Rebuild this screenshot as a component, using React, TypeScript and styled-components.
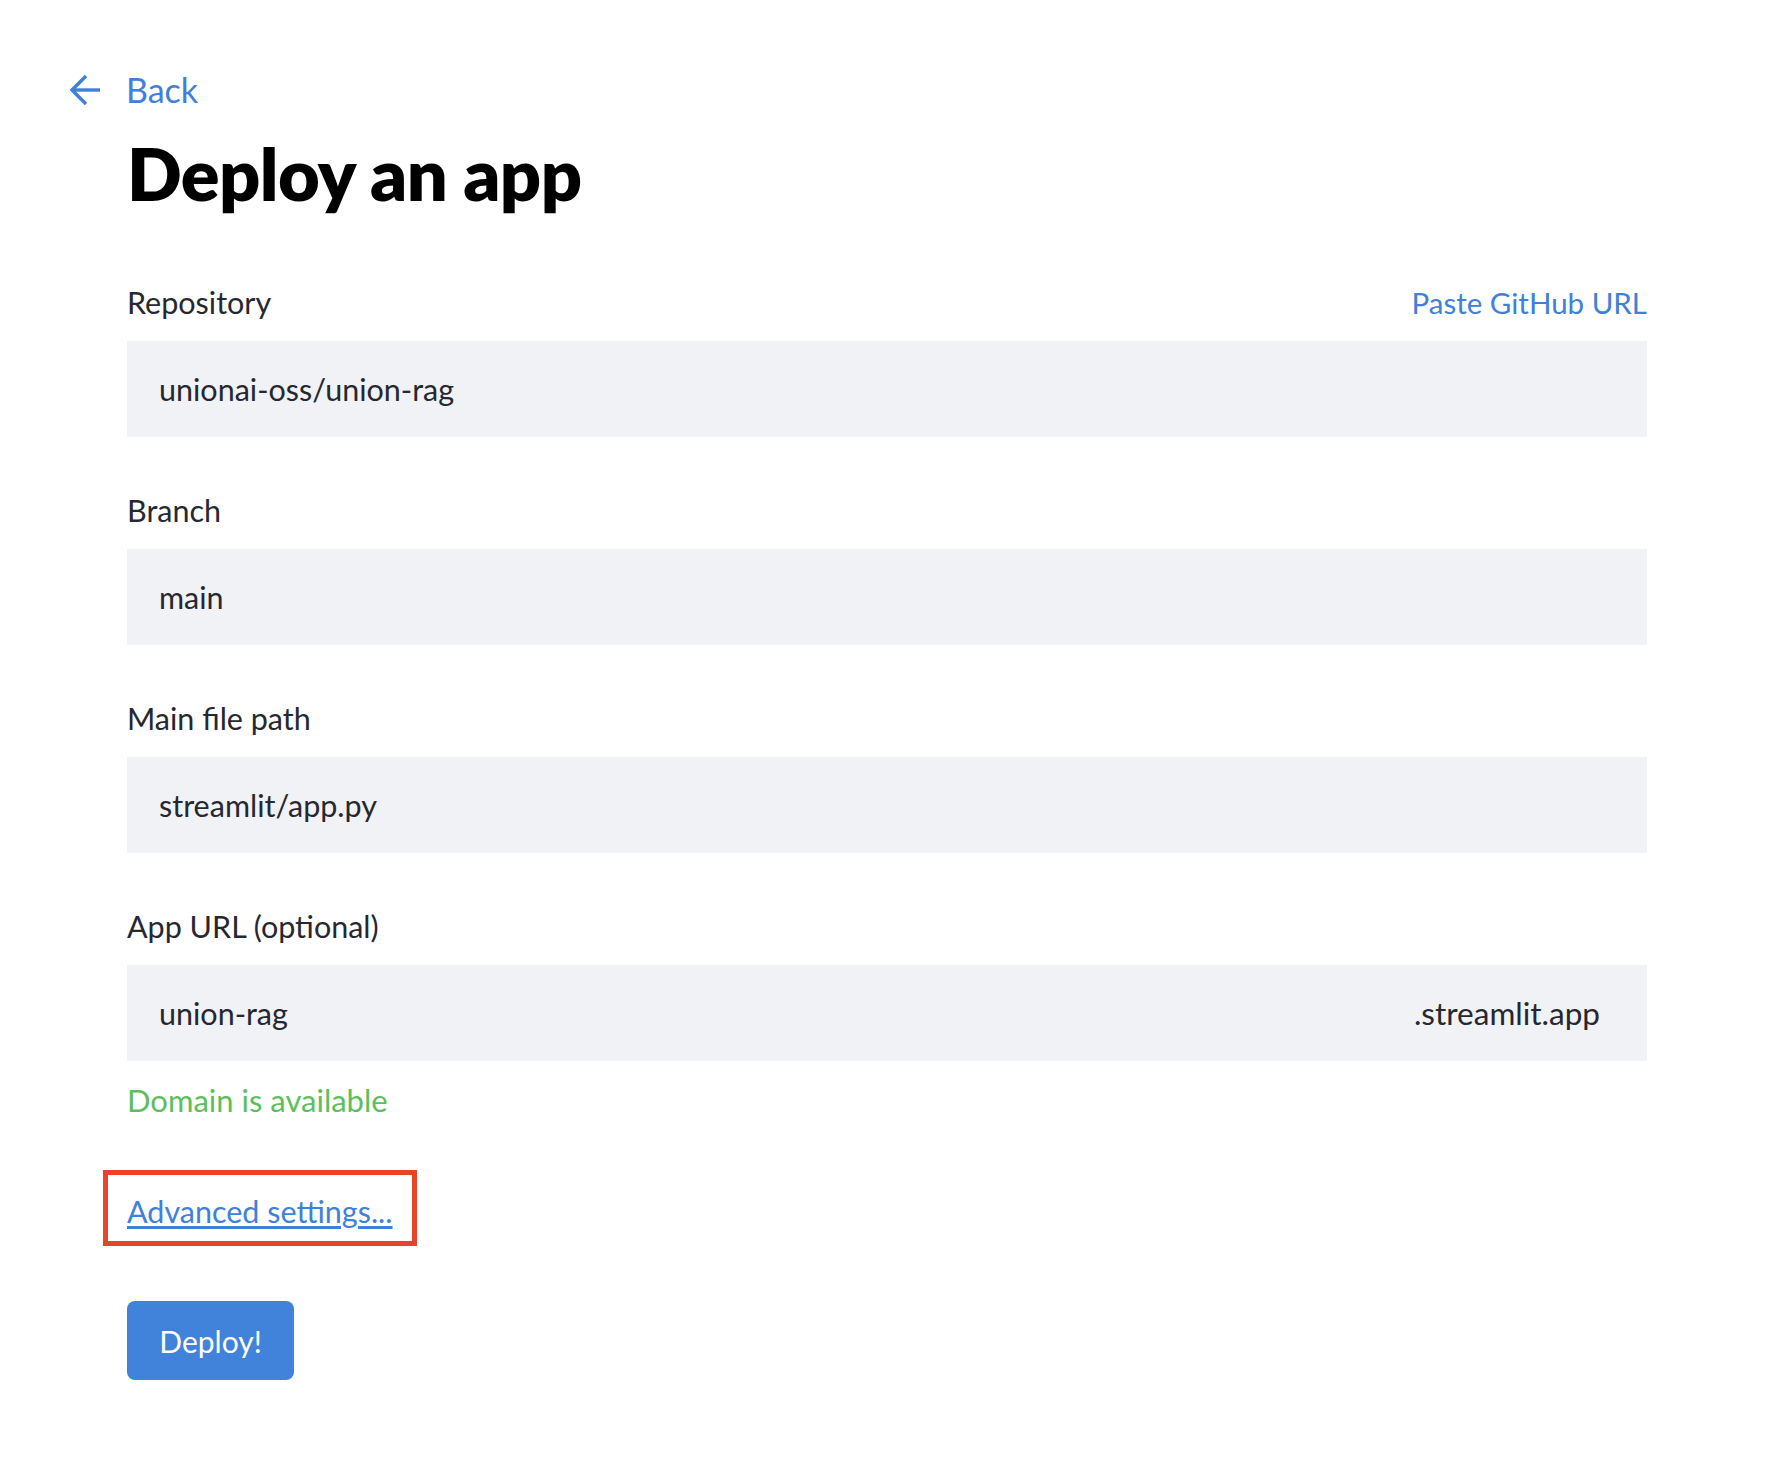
import React from "react";
import styled, { createGlobalStyle } from "styled-components";

const Global = createGlobalStyle`
  html, body { margin: 0; padding: 0; background: #ffffff; }
  body { font-family: Lato, "Noto Sans", sans-serif; color: #262730; }
  * { box-sizing: border-box; }
`;

const Page = styled.main`
  width: 1768px;
  padding: 72px 121px 80px 127px;
  display: flex;
  flex-direction: column;
`;

const BackLink = styled.a`
  display: flex;
  align-items: center;
  gap: 24px;
  margin-left: -57px;
  height: 36px;
  color: #3f80da;
  font-size: 34px;
  line-height: 36px;
  text-decoration: none;
  cursor: pointer;
`;

const Title = styled.h1`
  margin: 22px 0 0 0;
  font-size: 72px;
  line-height: 1.2;
  font-weight: 800;
  color: #000;
  letter-spacing: -0.6px;
`;

const Form = styled.form`
  display: flex;
  flex-direction: column;
  margin-top: 64px;
`;

const Field = styled.div<{ $last?: boolean }>`
  display: flex;
  flex-direction: column;
  margin-bottom: ${(p) => (p.$last ? "0" : "51px")};
`;

const LabelRow = styled.div`
  display: flex;
  justify-content: space-between;
  align-items: baseline;
  height: 44px;
  margin-bottom: 17px;
`;

const Label = styled.label`
  font-size: 30.5px;
  line-height: 44px;
  color: #262730;
`;

const TextLink = styled.a`
  font-size: 29.5px;
  line-height: 44px;
  color: #3f80da;
  cursor: pointer;
`;

const InputBox = styled.div`
  height: 96px;
  background: #f0f2f6;
  display: flex;
  align-items: center;
  justify-content: space-between;
  padding: 0 47px 0 32px;
  font-size: 30.5px;
  color: #262730;
`;

const Suffix = styled.span`
  color: #262730;
  font-size: 31.5px;
`;

const Hint = styled.div`
  margin-top: 17px;
  font-size: 31px;
  line-height: 44px;
  color: #5bbf5b;
`;

const Highlight = styled.div`
  align-self: flex-start;
  margin: 48px 0 0 -24px;
  padding: 18px 19px 12px 19px;
  border: 5px solid #e94429;
`;

const Advanced = styled.a`
  font-size: 30.5px;
  line-height: 36px;
  color: #3f80da;
  text-decoration: underline;
  text-underline-offset: 3px;
  cursor: pointer;
`;

const DeployButton = styled.button`
  align-self: flex-start;
  margin-top: 55px;
  width: 167px;
  height: 79px;
  border: none;
  border-radius: 8px;
  background: #4182db;
  color: #fff;
  font-family: inherit;
  font-size: 30px;
  cursor: pointer;
`;

const ArrowIcon = () => (
  <svg width="32" height="32" viewBox="0 0 32 32" fill="none">
    <path d="M30 16H3" stroke="#3f80da" strokeWidth="3.4" />
    <path d="M16 2L2 16l14 14" stroke="#3f80da" strokeWidth="3.4" strokeLinejoin="miter" />
  </svg>
);

export default function App() {
  return (
    <>
      <Global />
      <Page>
        <BackLink>
          <ArrowIcon />
          <span>Back</span>
        </BackLink>
        <Title>Deploy an app</Title>
        <Form onSubmit={(e) => e.preventDefault()}>
          <Field>
            <LabelRow>
              <Label>Repository</Label>
              <TextLink>Paste GitHub URL</TextLink>
            </LabelRow>
            <InputBox>unionai-oss/union-rag</InputBox>
          </Field>
          <Field>
            <LabelRow>
              <Label>Branch</Label>
            </LabelRow>
            <InputBox>main</InputBox>
          </Field>
          <Field>
            <LabelRow>
              <Label>Main file path</Label>
            </LabelRow>
            <InputBox>streamlit/app.py</InputBox>
          </Field>
          <Field $last>
            <LabelRow>
              <Label>App URL (optional)</Label>
            </LabelRow>
            <InputBox>
              <span>union-rag</span>
              <Suffix>.streamlit.app</Suffix>
            </InputBox>
          </Field>
          <Hint>Domain is available</Hint>
          <Highlight>
            <Advanced>Advanced settings...</Advanced>
          </Highlight>
          <DeployButton type="submit">Deploy!</DeployButton>
        </Form>
      </Page>
    </>
  );
}
